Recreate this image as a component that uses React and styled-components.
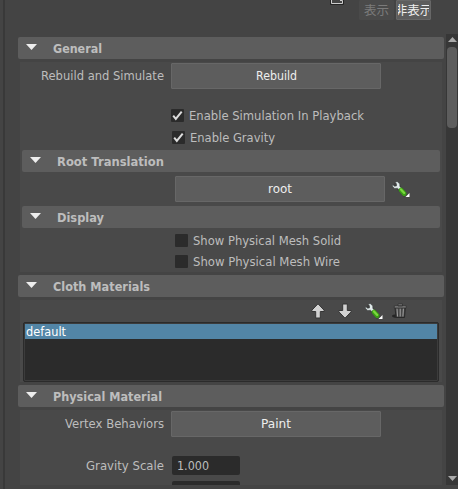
import styled, { createGlobalStyle } from 'styled-components';

const GlobalStyle = createGlobalStyle`
  * {
    box-sizing: border-box;
  }

  body {
    margin: 0;
    background: #444444;
    overflow: hidden;
  }
`;

const Label = ({ width, bold, children }) => (
  <LabelSvg width={width} height='20' $bold={bold}>
    <text x='0' y={bold ? 15 : 14} textLength={width} lengthAdjust='spacingAndGlyphs'>{children}</text>
  </LabelSvg>
);

const Section = ({ title, width, nested }) => (
  <SectionHeader $nested={nested}>
    <Triangle width='11' height='6' viewBox='0 0 11 6'>
      <path d='M0 0h11L5.5 6z' />
    </Triangle>
    <Label width={width} bold>{title}</Label>
  </SectionHeader>
);

const Check = ({ label, width, checked }) => (
  <>
    <Box>
      {checked && (
        <svg width='13' height='13' viewBox='0 0 13 13'>
          <path d='M2.2 6.6l2.6 3.2L10.7 2.6' fill='none' stroke='#dddddd' strokeWidth='2' />
        </svg>
      )}
    </Box>
    <Label width={width}>{label}</Label>
  </>
);

const Wrench = () => (
  <svg width='20' height='18' viewBox='0 0 20 18'>
    <path d='M3 4l4 3 3 3 5 6' stroke='#303030' strokeWidth='5' fill='none' opacity='.45' />
    <path d='M4 2l2.5-.2L8.8 4v2.5l2.2 2-2 2-2.6-2.3-2.8.3L1.5 6.2V4.4l2 1.8 2-.2.1-2z' fill='#e2ebeb' stroke='#343838' strokeWidth='.5' />
    <path d='M10 10l3.2 3.6' stroke='#3b9e17' strokeWidth='4.8' strokeLinecap='round' />
    <path d='M10 9.4l3.2 3.5' stroke='#7bd83d' strokeWidth='2.2' strokeLinecap='round' />
    <path d='M18.5 13v4h-4z' fill='#fff' />
  </svg>
);

const Arrow = ({ down }) => (
  <svg width='14' height='16' viewBox='0 0 14 16'>
    <path
      d='M7 .8L.9 7.2v1.3h3.8V15h4.6V8.5h3.8V7.2z'
      fill='#d2d2d2'
      stroke='#353535'
      transform={down ? 'rotate(180 7 8)' : undefined}
    />
  </svg>
);

const Trash = () => (
  <svg width='15' height='16' viewBox='0 0 15 16'>
    <ellipse cx='5' cy='13' rx='5' ry='1.8' fill='#252525' />
    <path d='M3 4.5h10.3l-.8 10H4z' fill='#454545' stroke='#292929' />
    <path d='M5 5.5l.5 8M8.2 5.5v8M11.4 5.5l-.5 8' stroke='#a5a5a5' />
    <path d='M2.3 2.8h11.9v2.1H2.3zM6 1h4.5v2H6z' fill='#868686' stroke='#303030' strokeWidth='.8' />
  </svg>
);

const App = () => {
  return (
    <Window>
      <GlobalStyle />
      <Edge />
      <Main>
        <Toolbar>
          <svg width='14' height='5' viewBox='0 0 14 5'>
            <path d='M.5 0v4.5h13V0' fill='#444' stroke='#242424' />
            <path d='M1.5 0v3.5h11V.5H10' fill='none' stroke='#ccc' />
          </svg>
          <SmallButton $disabled><span>表示</span></SmallButton>
          <SmallButton><span>非表示</span></SmallButton>
        </Toolbar>
        <Content>
          <Panels>
            <Section title='General' width={49} />
            <Frame $height={210}>
              <FormRow $top={1} $height={26}>
                <RowLabel><Label width={123}>Rebuild and Simulate</Label></RowLabel>
                <Button><Label width={41}>Rebuild</Label></Button>
              </FormRow>
              <FormRow $top={20} $height={13} $left={151}>
                <Check label='Enable Simulation In Playback' width={175} checked />
              </FormRow>
              <FormRow $top={9} $height={13} $left={152}>
                <Check label='Enable Gravity' width={85} checked />
              </FormRow>
              <Subsection $top={6}>
                <Section title='Root Translation' width={107} nested />
                <FormRow $top={4} $height={26} $left={153}>
                  <Button><Label width={24}>root</Label></Button>
                  <Tool><Wrench /></Tool>
                </FormRow>
              </Subsection>
              <Subsection $top={4}>
                <Section title='Display' width={47} nested />
                <FormRow $top={6} $height={13} $left={153}>
                  <Check label='Show Physical Mesh Solid' width={148} />
                </FormRow>
                <FormRow $top={8} $height={13} $left={153}>
                  <Check label='Show Physical Mesh Wire' width={147} />
                </FormRow>
              </Subsection>
            </Frame>
            <Section title='Cloth Materials' width={97} />
            <Frame $height={82}>
              <Tools>
                <Arrow />
                <Arrow down />
                <Wrench />
                <Trash />
              </Tools>
              <List>
                <Selected><Label width={40}>default</Label></Selected>
              </List>
            </Frame>
            <Section title='Physical Material' width={109} />
            <Frame $height={75}>
              <FormRow $top={1} $height={26}>
                <RowLabel><Label width={99}>Vertex Behaviors</Label></RowLabel>
                <Button><Label width={30}>Paint</Label></Button>
              </FormRow>
              <FormRow $top={19} $height={19}>
                <RowLabel $field><Label width={78}>Gravity Scale</Label></RowLabel>
                <Field><Label width={32}>1.000</Label></Field>
              </FormRow>
              <FormRow $top={6} $height={19} $left={152}>
                <Field />
              </FormRow>
            </Frame>
          </Panels>
          <Scrollbar>
            <svg width='9' height='5' viewBox='0 0 9 5'><path d='M0 5L4.5 0 9 5z' fill='#aaa' /></svg>
            <Thumb />
            <svg width='9' height='5' viewBox='0 0 9 5'><path d='M0 0h9L4.5 5z' fill='#aaa' /></svg>
          </Scrollbar>
        </Content>
      </Main>
    </Window>
  );
};

const Window = styled.div`
  width: 458px;
  height: 489px;
  display: flex;
  overflow: hidden;
  background: #444444;
  color: #bdbdbd;
  font: 13px 'DejaVu Sans', 'Noto Sans CJK JP', sans-serif;
`;

const Edge = styled.div`
  width: 5px;
  flex-shrink: 0;
  border-right: 2px solid #393939;
`;

const Main = styled.div`
  width: 453px;
`;

const Toolbar = styled.div`
  height: 34px;
  display: flex;
  align-items: flex-start;
  padding-left: 325px;

  svg {
    margin-right: 15px;
  }
`;

const SmallButton = styled.div`
  width: 35px;
  height: 20px;
  flex-shrink: 0;
  margin-right: 2px;
  display: flex;
  align-items: center;
  justify-content: center;
  white-space: nowrap;
  border: 1px solid ${({ $disabled }) => ($disabled ? '#4a4a4a' : '#676767')};
  border-radius: 1px;
  background: ${({ $disabled }) => ($disabled ? '#4a4a4a' : '#5d5d5d')};
  color: ${({ $disabled }) => ($disabled ? '#7b7b7b' : '#eeeeee')};
  font: 12.5px/18px 'Noto Sans CJK JP', sans-serif;

  span {
    width: 31px;
    display: flex;
    justify-content: center;
    overflow: hidden;
  }
`;

const Content = styled.div`
  height: 451px;
  display: flex;
`;

const Panels = styled.div`
  width: 441px;
  padding: 3px 2px 0 13px;
  overflow: hidden;
`;

const SectionHeader = styled.div`
  width: ${({ $nested }) => ($nested ? 418 : 426)}px;
  height: 22px;
  display: flex;
  align-items: center;
  padding-left: 8px;
  background: #5d5d5d;
  border-radius: 2px;
`;

const Triangle = styled.svg`
  margin: 0 16px 3px 0;
  fill: #eeeeee;
`;

const LabelSvg = styled.svg`
  flex-shrink: 0;
  overflow: visible;
  fill: currentColor;
  font-size: ${({ $bold }) => ($bold ? '12.5px' : '13px')};
  font-weight: ${({ $bold }) => ($bold ? 700 : 400)};
`;

const Frame = styled.div`
  width: 422px;
  height: ${({ $height }) => $height}px;
  margin: 3px 0 3px 2px;
  display: flow-root;
  background: #494949;
`;

const Subsection = styled.div`
  margin: ${({ $top }) => $top}px 0 0 2px;
`;

const FormRow = styled.div`
  height: ${({ $height }) => $height}px;
  margin-top: ${({ $top }) => $top}px;
  padding-left: ${({ $left = 0 }) => $left}px;
  display: flex;
  align-items: center;
`;

const RowLabel = styled.div`
  width: ${({ $field }) => ($field ? 152 : 151)}px;
  display: flex;
  justify-content: flex-end;
  padding-right: ${({ $field }) => ($field ? 8 : 7)}px;
`;

const Button = styled.div`
  width: 210px;
  height: 26px;
  display: flex;
  align-items: center;
  justify-content: center;
  background: #5d5d5d;
  border: 1px solid #676767;
  border-radius: 1px;
  color: #eeeeee;
`;

const Tool = styled.div`
  display: flex;
  padding-left: 6px;
`;

const Box = styled.div`
  width: 13px;
  height: 13px;
  display: flex;
  flex-shrink: 0;
  margin-right: 5px;
  border-radius: 1px;
  background: #2b2b2b;
`;

const Tools = styled.div`
  height: 22px;
  display: flex;
  align-items: center;
  padding-left: 291px;

  svg:nth-child(1) {
    margin-right: 13px;
  }

  svg:nth-child(2) {
    margin-right: 12px;
  }

  svg:nth-child(3) {
    margin-right: 8px;
  }
`;

const List = styled.div`
  width: 416px;
  height: 60px;
  margin-left: 3px;
  padding: 1px;
  background: #2b2b2b;
  border: 1px solid #2b2b2b;
  border-radius: 2px;
  box-shadow: inset 0 0 0 1px #3c3c3c;
`;

const Selected = styled.div`
  height: 15px;
  display: flex;
  align-items: center;
  padding-left: 1px;
  background: #5285a6;
  color: #ffffff;
`;

const Field = styled.div`
  width: 68px;
  height: 19px;
  display: flex;
  align-items: center;
  padding-left: 5px;
  background: #2b2b2b;
  border-radius: 2px;
`;

const Scrollbar = styled.div`
  width: 12px;
  height: 451px;
  display: flex;
  flex-direction: column;
  align-items: center;
  padding: 3px 0 4px;
  background: #373737;
`;

const Thumb = styled.div`
  width: 10px;
  height: 81px;
  margin: 5px 0 auto;
  background: #5d5d5d;
  border-radius: 4px;
`;

export default App;
